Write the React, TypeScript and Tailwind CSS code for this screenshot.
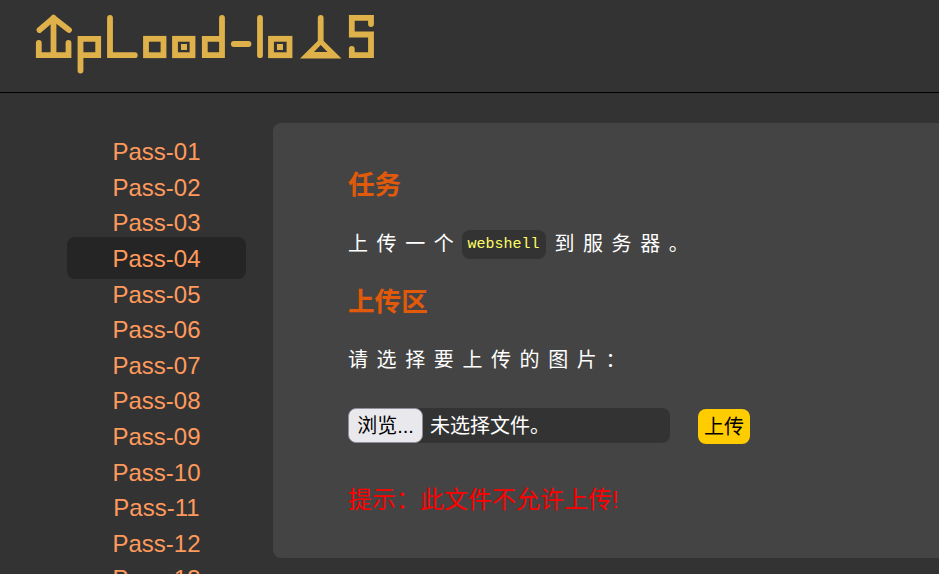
const passes = Array.from({ length: 13 }, (_, i) => `Pass-${String(i + 1).padStart(2, "0")}`);

const Logo = () => (
  <svg width="400" height="80" viewBox="0 0 400 80" fill="none" stroke="#dfb14a" strokeWidth="5.8" strokeLinecap="round" strokeLinejoin="miter" aria-label="logo">
    {/* up arrow */}
    <path d="M39.5 30 L53.5 18 L69 30" />
    <path d="M53.5 18 V55" />
    <path d="M38.8 43 V55.2 H68.5 V43" />
    {/* p */}
    <path d="M80.5 70.5 V38.8 H98.2 V55.2 H81" />
    {/* L */}
    <path d="M110 17.8 V55.2 H134.8" />
    {/* o */}
    <rect x="146" y="38.8" width="17.5" height="16.4" />
    {/* o with dot */}
    <rect x="175" y="38.8" width="17.5" height="16.4" />
    <rect x="181" y="44" width="6" height="6" fill="#dfb14a" stroke="none" />
    {/* d */}
    <path d="M222 17.8 V55.2 H204.8 V38.8 H222" />
    {/* dash */}
    <path d="M233.8 44 H248.5" />
    {/* l */}
    <path d="M260 17.8 V55.2" />
    {/* o with dot */}
    <rect x="271" y="38.8" width="18.5" height="16.4" />
    <rect x="277" y="44" width="6" height="6" fill="#dfb14a" stroke="none" />
    {/* A */}
    <path d="M320.7 17.8 V42" />
    <path fillRule="evenodd" d="M320.7 38 L341.5 58.5 H300 Z M320.7 45 L314 52 H327.5 Z" fill="#dfb14a" stroke="none" />
    {/* S */}
    <path d="M371 24 V17.8 H351.8 V34.5 H371 V55.2 H351.8 V49" />
  </svg>
);

export default function App() {
  return (
    <div className="h-[574px] w-[939px] overflow-hidden bg-[#333333] font-['Liberation_Sans','Noto_Sans_CJK_SC',sans-serif]">
      <header className="h-[93px] border-b border-black">
        <Logo />
      </header>

      <div className="flex items-start">
        <nav className="ml-[67px] mt-[41.5px] w-[179px] shrink-0">
          <ul>
            {passes.map((name) =>
              name === "Pass-04" ? (
                <li key={name} className="-mt-[3.9px] -mb-[2.5px] flex h-[42px] items-center justify-center rounded-lg bg-[#252525] pt-[1px] text-2xl text-[#ff9a5c]">
                  {name}
                </li>
              ) : (
                <li key={name} className="flex h-[35.6px] items-center justify-center text-2xl text-[#ff9a5c]">
                  {name}
                </li>
              )
            )}
          </ul>
        </nav>

        <main className="ml-[27px] mt-[30px] h-[435px] w-[700px] shrink-0 rounded-lg bg-[#444444] pl-[75px] pt-[44px]">
          <h2 className="text-[26.6px] leading-[36px] font-bold text-[#e05a0a]">任务</h2>
          <p className="mt-[26px] flex h-[30px] items-center text-xl tracking-[8.6px] text-white">
            上传一个
            <code className="mr-[8px] inline-block h-[29px] w-[84px] rounded-lg bg-[#333333] pr-[2px] text-center font-['Liberation_Mono',monospace] text-[15px] leading-[29px] font-normal tracking-normal text-[#ffff66]">
              webshell
            </code>
            到服务器。
          </p>
          <h2 className="mt-[25px] text-[26.6px] leading-[36px] font-bold text-[#e05a0a]">上传区</h2>
          <p className="mt-[25px] h-[30px] text-xl leading-[30px] tracking-[8.6px] text-white">请选择要上传的图片：</p>

          <form className="mt-[33px] flex items-start">
            <div className="flex h-[35px] w-[322px] items-center rounded-lg bg-[#333333] text-xl text-white">
              <button type="button" className="h-[35px] w-[75px] rounded-lg border border-[#8f8f9d] bg-[#e9e9ed] text-center text-xl text-black">
                浏览...
              </button>
              <span className="ml-[7px]">未选择文件。</span>
            </div>
            <button type="button" className="ml-[28px] mt-px h-[35px] w-[52px] rounded-lg bg-[#ffcc00] text-center text-xl text-black">
              上传
            </button>
          </form>

          <p className="mt-[38px] text-2xl leading-[36px] text-[#ff0000]">提示：此文件不允许上传!</p>
        </main>
      </div>
    </div>
  );
}
